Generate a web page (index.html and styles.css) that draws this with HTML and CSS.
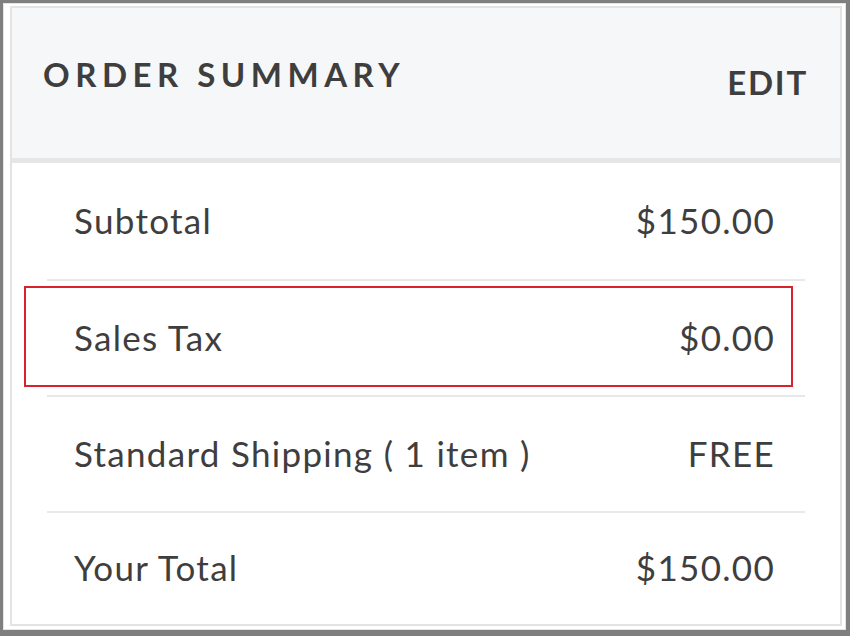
FILE: index.html
```html
<!DOCTYPE html>
<html>
<head>
<meta charset="utf-8">
<link rel="stylesheet" href="styles.css">
</head>
<body>
<div class="frame">
  <div class="panel">
    <div class="header">
      <h2 class="title">ORDER SUMMARY</h2>
      <a class="edit">EDIT</a>
    </div>
    <div class="rows">
      <div class="row"><span>Subtotal</span><span>$150.00</span></div>
      <div class="row highlighted"><span>Sales Tax</span><span>$0.00</span><div class="mark"></div></div>
      <div class="row"><span>Standard Shipping ( 1 item )</span><span>FREE</span></div>
      <div class="row last"><span>Your Total</span><span>$150.00</span></div>
    </div>
  </div>
</div>
</body>
</html>
```

FILE: styles.css
```css
html, body {
  margin: 0;
  padding: 0;
}
body {
  background: #7f7f7f;
  width: 850px;
  height: 636px;
  overflow: hidden;
  font-family: Lato, "Open Sans", sans-serif;
  color: #3f3e3e;
}
.frame {
  box-sizing: border-box;
  margin: 3px 4px 0 3px;
  height: 627px;
  background: #ffffff;
  border: 1px solid #e4e4e4;
  padding: 2px 3px 3px 6px;
}
.panel {
  box-sizing: border-box;
  height: 100%;
  border: 2px solid #e3e3e3;
  display: flex;
  flex-direction: column;
}
.header {
  background: #f6f7f9;
  height: 150px;
  border-bottom: 5px solid #e5e6e8;
  display: flex;
  justify-content: space-between;
  align-items: flex-start;
  padding: 0 32px 0 31px;
}
.title {
  margin: 46px 0 0 0;
  font-size: 33px;
  line-height: 40px;
  font-weight: 700;
  letter-spacing: 5.5px;
  color: #3f3e3e;
}
.edit {
  margin-top: 54px;
  font-size: 33px;
  line-height: 40px;
  font-weight: 700;
  letter-spacing: 1.8px;
  color: #3f3e3e;
}
.rows {
  flex: 1;
  padding: 0 35px;
  display: flex;
  flex-direction: column;
}
.row {
  position: relative;
  box-sizing: border-box;
  height: 116px;
  border-top: 2px solid #e8e8e8;
  display: flex;
  justify-content: space-between;
  align-items: center;
  padding: 0 30px 3px 27px;
  font-size: 35px;
  letter-spacing: 1.3px;
}
.row:first-child {
  border-top: none;
}
.row.last {
  height: auto;
  flex: 1;
}
.mark {
  position: absolute;
  left: -23px;
  right: 12px;
  top: 5px;
  bottom: 8px;
  border: 2px solid #d8232f;
}
```
